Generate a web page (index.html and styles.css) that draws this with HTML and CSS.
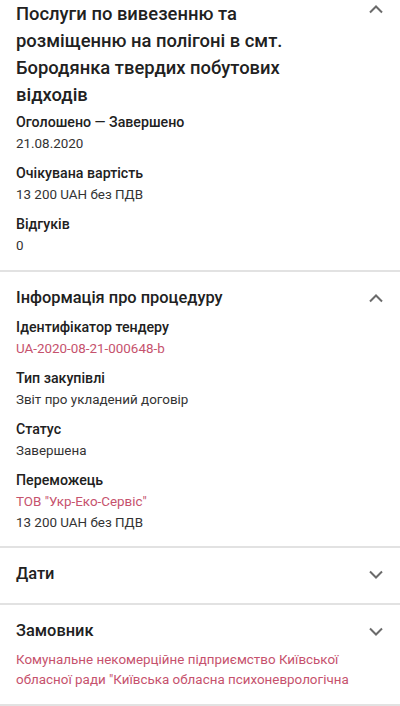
FILE: index.html
```html
<!DOCTYPE html>
<html lang="uk">
<head>
<meta charset="utf-8">
<link rel="stylesheet" href="styles.css">
</head>
<body>
<section class="sec sec-first">
  <div class="head">
    <h1 class="title">Послуги по вивезенню та розміщенню на полігоні в смт. Бородянка твердих побутових відходів</h1>
    <svg class="chev chev-title" viewBox="0 0 16 10" width="16" height="10"><path d="M2 8.5 L8 2.5 L14 8.5" /></svg>
  </div>
  <div class="items items-first">
    <div class="item"><div class="label">Оголошено — Завершено</div><div class="value">21.08.2020</div></div>
    <div class="item"><div class="label">Очікувана вартість</div><div class="value">13 200 UAH без ПДВ</div></div>
    <div class="item"><div class="label">Відгуків</div><div class="value">0</div></div>
  </div>
</section>
<section class="sec sec-proc">
  <div class="head">
    <h2 class="heading">Інформація про процедуру</h2>
    <svg class="chev" viewBox="0 0 16 10" width="16" height="10"><path d="M2 8.5 L8 2.5 L14 8.5" /></svg>
  </div>
  <div class="items">
    <div class="item"><div class="label">Ідентифікатор тендеру</div><div class="value link">UA-2020-08-21-000648-b</div></div>
    <div class="item"><div class="label">Тип закупівлі</div><div class="value">Звіт про укладений договір</div></div>
    <div class="item"><div class="label">Статус</div><div class="value">Завершена</div></div>
    <div class="item"><div class="label">Переможець</div><div class="value link">ТОВ "Укр-Еко-Сервіс"</div><div class="value">13 200 UAH без ПДВ</div></div>
  </div>
</section>
<section class="sec sec-dates">
  <div class="head">
    <h2 class="heading">Дати</h2>
    <svg class="chev" viewBox="0 0 16 10" width="16" height="10"><path d="M2 2.5 L8 8.5 L14 2.5" /></svg>
  </div>
</section>
<section class="sec sec-cust">
  <div class="head">
    <h2 class="heading">Замовник</h2>
    <svg class="chev" viewBox="0 0 16 10" width="16" height="10"><path d="M2 2.5 L8 8.5 L14 2.5" /></svg>
  </div>
  <div class="cust link">Комунальне некомерційне підприємство Київської обласної ради "Київська обласна психоневрологічна</div>
</section>
</body>
</html>
```

FILE: styles.css
```css
html, body {
  margin: 0;
  padding: 0;
  background: #ffffff;
}
body {
  font-family: Roboto, "Noto Sans", "Liberation Sans", sans-serif;
  color: #212121;
  width: 400px;
  height: 706px;
  overflow: hidden;
}
.sec {
  padding: 14px 16px 14px 16px;
  border-bottom: 2px solid #e2e2e2;
}
.sec-first {
  padding-top: 0;
  padding-bottom: 14px;
}
.sec-proc {
  padding-bottom: 13px;
}
.sec-dates {
  padding-bottom: 17px;
}
.head {
  display: flex;
  justify-content: space-between;
  align-items: center;
  gap: 16px;
}
.sec-first .head {
  align-items: flex-start;
}
.title {
  margin: 0;
  font-size: 18.4px;
  line-height: 27px;
  font-weight: 500;
  color: #212121;
  max-width: 300px;
}
.heading {
  margin: 0;
  font-size: 16.4px;
  line-height: 24px;
  font-weight: 500;
  color: #212121;
}
.chev {
  flex: none;
  fill: none;
  stroke: #6b6b6b;
  stroke-width: 2;
}
.chev-title {
  margin-top: 4px;
}
.items {
  display: flex;
  flex-direction: column;
  gap: 9px;
  margin-top: 7px;
}
.items-first {
  margin-top: 4px;
}
.label {
  font-size: 14.2px;
  line-height: 21px;
  font-weight: 500;
  color: #212121;
}
.value {
  font-size: 13.4px;
  line-height: 21px;
  color: #333333;
}
.link {
  color: #c6526d;
}
.cust {
  margin-top: 7px;
  font-size: 13.4px;
  line-height: 20px;
  max-width: 355px;
}
```
